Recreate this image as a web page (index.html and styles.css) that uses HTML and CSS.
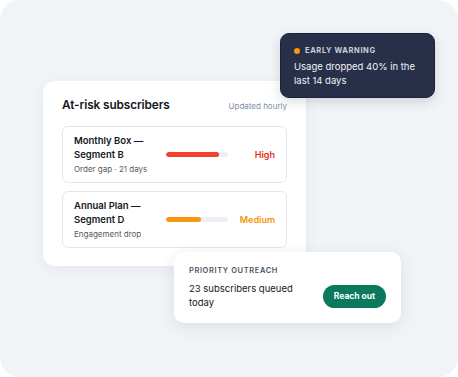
FILE: index.html
```html
<!DOCTYPE html>
<html>
	<head>
		<meta charset="utf-8">
		<title>At-risk subscribers</title>
		<link rel="stylesheet" href="styles.css">
	</head>
	<body>
		<div class="stage">
			<div class="risk-card">
				<div class="risk-head">
					<h2>At-risk subscribers</h2>
					<span class="updated">Updated hourly</span>
				</div>
				<div class="risk-row">
					<div class="risk-info">
						<div class="risk-name">Monthly Box —<br>Segment B</div>
						<div class="risk-note">Order gap · 21 days</div>
					</div>
					<div class="bar"><span class="bar-fill high" style="width: 85%"></span></div>
					<div class="level high">High</div>
				</div>
				<div class="risk-row">
					<div class="risk-info">
						<div class="risk-name">Annual Plan —<br>Segment D</div>
						<div class="risk-note">Engagement drop</div>
					</div>
					<div class="bar"><span class="bar-fill medium" style="width: 57%"></span></div>
					<div class="level medium">Medium</div>
				</div>
			</div>

			<div class="warn-card">
				<div class="warn-label"><span class="dot"></span>EARLY WARNING</div>
				<p>Usage dropped 40% in the last 14 days</p>
			</div>

			<div class="outreach-card">
				<div class="outreach-label">PRIORITY OUTREACH</div>
				<div class="outreach-body">
					<p>23 subscribers queued today</p>
					<a class="btn" href="#">Reach out</a>
				</div>
			</div>
		</div>
	</body>
</html>
```

FILE: styles.css
```css
*{margin: 0;padding: 0;box-sizing: border-box;}
html,body{background: #fff;}
body{
	font-family: Inter, "Noto Sans", sans-serif;
	color: #15171c;
}
.stage{
	position: relative;
	width: 458px;
	height: 377px;
	background: #f1f4f7;
	border-radius: 20px;
	overflow: hidden;
}

/* main card */
.risk-card{
	position: absolute;
	left: 43px;
	top: 81px;
	width: 263px;
	height: 185px;
	background: #fff;
	border-radius: 12px;
	padding: 17px 19px 0 19px;
	box-shadow: 0 4px 14px rgba(30, 40, 60, 0.06);
}
.risk-head{
	display: flex;
	justify-content: space-between;
	align-items: center;
	margin-bottom: 14px;
}
.risk-head h2{
	font-size: 11.8px;
	font-weight: 600;
	letter-spacing: -0.1px;
}
.updated{
	font-size: 8px;
	color: #7d90a8;
	margin-top: 2px;
}
.risk-row{
	display: flex;
	align-items: center;
	height: 57px;
	border: 1px solid #e3e7ec;
	border-radius: 6px;
	padding: 0 11px;
	margin-bottom: 8px;
}
.risk-info{
	width: 92px;
}
.risk-name{
	font-size: 9.5px;
	font-weight: 600;
	line-height: 14px;
}
.risk-note{
	font-size: 8px;
	color: #555a63;
	line-height: 13px;
	margin-top: 1px;
}
.bar{
	width: 62px;
	height: 5px;
	border-radius: 3px;
	background: #edf1f5;
	overflow: hidden;
}
.bar-fill{
	display: block;
	height: 100%;
	border-radius: 3px;
}
.bar-fill.high{background: #f4402c;}
.bar-fill.medium{background: #f59a0c;}
.level{
	margin-left: auto;
	font-size: 9px;
	font-weight: 600;
}
.level.high{color: #ec2b1d;}
.level.medium{color: #f29407;}

/* warning card */
.warn-card{
	position: absolute;
	left: 280px;
	top: 33px;
	width: 155px;
	height: 65px;
	background: #283049;
	border: 1px solid #1d2337;
	border-radius: 9px;
	padding: 12px 12px 0 13px;
	box-shadow: 0 4px 12px rgba(20, 30, 50, 0.15);
}
.warn-label{
	display: flex;
	align-items: center;
	font-size: 7.5px;
	font-weight: 700;
	letter-spacing: 0.6px;
	color: #c9cfdb;
}
.dot{
	width: 6px;
	height: 6px;
	border-radius: 50%;
	background: #f59a0c;
	margin-right: 5px;
}
.warn-card p{
	margin-top: 5px;
	font-size: 9.5px;
	line-height: 14px;
	color: #f1f3f7;
}

/* outreach card */
.outreach-card{
	position: absolute;
	left: 174px;
	top: 252px;
	width: 227px;
	height: 71px;
	background: #fff;
	border-radius: 10px;
	padding: 14px 15px 0 15px;
	box-shadow: 0 4px 16px rgba(30, 40, 60, 0.1);
}
.outreach-label{
	font-size: 7.5px;
	font-weight: 600;
	letter-spacing: 0.6px;
	color: #4f535b;
}
.outreach-body{
	display: flex;
	justify-content: space-between;
	align-items: center;
	margin-top: 7px;
}
.outreach-body p{
	width: 115px;
	font-size: 9.5px;
	line-height: 14px;
}
.btn{
	display: block;
	width: 63px;
	height: 23px;
	line-height: 23px;
	text-align: center;
	border-radius: 12px;
	background: #0b7a5c;
	color: #fff;
	font-size: 8.5px;
	font-weight: 700;
	text-decoration: none;
}
```
